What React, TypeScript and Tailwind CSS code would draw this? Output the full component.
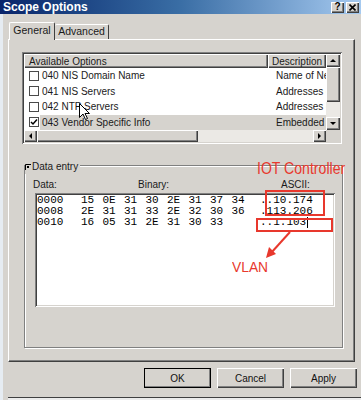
import React from "react"

const raised =
  "shadow-[inset_1px_1px_0_#ffffff,inset_-1px_-1px_0_#404040,inset_-2px_-2px_0_#808080]"
const sunken =
  "shadow-[inset_1px_1px_0_#808080,inset_-1px_-1px_0_#ffffff,inset_2px_2px_0_#404040,inset_-2px_-2px_0_#d6d3ce]"

function Arrow({ dir }: { dir: "up" | "down" | "left" | "right" }) {
  const pts = {
    up: "1,5 4,2 7,5",
    down: "1,2 4,5 7,2",
    left: "5,1 2,4 5,7",
    right: "2,1 5,4 2,7",
  }[dir]
  return (
    <svg width="8" height="8" viewBox="0 0 8 8">
      <polygon points={pts} fill="#000" />
    </svg>
  )
}

function ScrollBtn({ dir, className }: { dir: "up" | "down" | "left" | "right"; className: string }) {
  return (
    <div className={`flex items-center justify-center bg-[#d6d3ce] ${raised} ${className}`}>
      <Arrow dir={dir} />
    </div>
  )
}

const options = [
  { name: "040 NIS Domain Name", desc: "Name of Network", checked: false },
  { name: "041 NIS Servers", desc: "Addresses of", checked: false },
  { name: "042 NTP Servers", desc: "Addresses of", checked: false },
  { name: "043 Vendor Specific Info", desc: "Embedded vendor", checked: true },
]

const dataRows = [
  { addr: "0000", bytes: ["15", "0E", "31", "30", "2E", "31", "37", "34"], ascii: "..10.174" },
  { addr: "0008", bytes: ["2E", "31", "31", "33", "2E", "32", "30", "36"], ascii: ".113.206" },
  { addr: "0010", bytes: ["16", "05", "31", "2E", "31", "30", "33"], ascii: "..1.103" },
]

function Button({ label, isDefault }: { label: string; isDefault?: boolean }) {
  return (
    <div
      className={`h-[20px] w-[67px] flex items-center justify-center bg-[#d6d3ce] text-[#111] ${raised} ${
        isDefault ? "outline outline-1 outline-black -outline-offset-1" : ""
      }`}
    >
      {label}
    </div>
  )
}

export default function App() {
  return (
    <div className="relative w-[361px] h-[400px] overflow-hidden bg-[#d6d3ce] font-['Liberation_Sans',Arial,sans-serif] text-[10px] text-[#1a1a1a] flex flex-col">
      {/* title bar */}
      <div className="h-[14px] flex items-center bg-linear-to-r from-[#0a246a] via-[#3a6ea5] to-[#a6caf0] pl-[3px] pr-[2px]">
        <span className="text-white font-bold text-[12px] leading-none">Scope Options</span>
        <div className="ml-auto flex gap-[2px]">
          <div className={`w-[13px] h-[11px] bg-[#d6d3ce] ${raised} flex items-center justify-center text-[10px] font-bold leading-none text-black`}>?</div>
          <div className={`w-[13px] h-[11px] bg-[#d6d3ce] ${raised} flex items-center justify-center`}>
            <svg width="7" height="7" viewBox="0 0 7 7">
              <path d="M0.5 0.5 L6.5 6.5 M6.5 0.5 L0.5 6.5" stroke="#000" strokeWidth="1.6" />
            </svg>
          </div>
        </div>
      </div>

      <div className="flex-1 flex flex-col border-l-[3px] border-[#e6ecf2] pl-[5px] pt-[8px]">
        {/* tabs */}
        <div className="flex items-end h-[17px] pl-[1px] text-[10.5px]">
          <div className="relative z-10 h-[18px] -mb-[1px] w-[46px] bg-[#d6d3ce] border-t border-l border-white border-r border-r-[#404040] rounded-t-[2px] flex items-center justify-center pb-[2px]">
            General
          </div>
          <div className="h-[15px] w-[54px] bg-[#d6d3ce] border-t border-r border-white border-r-[#404040] rounded-t-[2px] flex items-center justify-center">
            Advanced
          </div>
        </div>

        {/* tab panel */}
        <div className="w-[347px] h-[323px] border-t border-l border-white border-r border-b border-r-[#404040] border-b-[#404040] shadow-[inset_-1px_-1px_0_#808080] pt-[12px] pl-[13px]">
          {/* available options list */}
          <div className={`w-[320px] h-[92px] p-[2px] bg-white ${sunken}`}>
            <div className="flex h-[88px]">
              <div className="w-[302px] flex flex-col">
                <div className="flex h-[14px]">
                  <div className={`w-[244px] bg-[#d6d3ce] ${raised} pl-[5px] flex items-center`}>Available Options</div>
                  <div className={`w-[58px] bg-[#d6d3ce] ${raised} pl-[4px] flex items-center overflow-hidden whitespace-nowrap`}>Description</div>
                </div>
                {options.map((o) => (
                  <div key={o.name} className="flex h-[15.5px] items-center">
                    <div className="w-[16px] flex items-center justify-center pl-[3px]">
                      <div className="w-[10px] h-[10px] border border-[#4a4a4a] bg-white flex items-center justify-center">
                        {o.checked && (
                          <svg width="8" height="8" viewBox="0 0 8 8">
                            <path d="M1 4 L3 6 L7 1.5" stroke="#000" strokeWidth="1.5" fill="none" />
                          </svg>
                        )}
                      </div>
                    </div>
                    <div className={`flex flex-1 h-full items-center ${o.checked ? "bg-[#d6d3ce]" : ""}`}>
                      <div className="w-[228px] pl-[2px] whitespace-nowrap">{o.name}</div>
                      <div className="w-[58px] pl-[8px] overflow-hidden whitespace-nowrap">{o.desc}</div>
                    </div>
                  </div>
                ))}
                <div className="flex h-[12px] mt-auto">
                  <ScrollBtn dir="left" className="w-[13px] h-[12px]" />
                  <div className={`w-[161px] h-[12px] bg-[#d6d3ce] ${raised}`} />
                  <div className="w-[115px] h-[12px] bg-[#ebe9e5]" />
                  <ScrollBtn dir="right" className="w-[13px] h-[12px]" />
                </div>
              </div>
              <div className="w-[14px] flex flex-col">
                <ScrollBtn dir="up" className="w-[14px] h-[13px]" />
                <div className={`h-[35px] bg-[#d6d3ce] ${raised}`} />
                <div className="h-[15px] bg-[#ebe9e5]" />
                <ScrollBtn dir="down" className="w-[14px] h-[13px]" />
                <div className="flex-1 bg-[#d6d3ce]" />
              </div>
            </div>
          </div>

          {/* data entry group */}
          <div className="relative mt-[21px] ml-[2px] w-[319px] h-[183px] border border-[#808080] shadow-[1px_1px_0_#ffffff,inset_1px_1px_0_#ffffff] pt-[12px] pl-[8px]">
            <div className="absolute -top-[7px] left-[0px] flex items-center bg-[#d6d3ce] pr-[2px]">
              <svg width="6" height="6" viewBox="0 0 6 6" className="mr-[1px]">
                <path d="M0.5 6 V0.5 H6" stroke="#000" strokeWidth="1" fill="none" />
                <rect x="2" y="2" width="2" height="2" fill="#000" />
              </svg>
              Data entry
            </div>
            <div className="flex h-[13px] items-center">
              <span className="w-[105px]">Data:</span>
              <span className="w-[143px]">Binary:</span>
              <span>ASCII:</span>
            </div>
            <div className={`mt-[2px] ml-[2px] w-[300px] h-[114px] bg-white p-[2px] ${sunken}`}>
              <div className="font-['Liberation_Mono','Courier_New',monospace] text-[11px] leading-[11px] text-black">
                {dataRows.map((r, i) => (
                  <div key={r.addr} className="flex h-[11px] whitespace-pre">
                    <span className="w-[44px]">{r.addr}</span>
                    <span className="w-[179px] flex">
                      {r.bytes.map((b, j) => (
                        <span key={j} className="w-[21.5px]">{b}</span>
                      ))}
                    </span>
                    <span className="relative">
                      {r.ascii}
                      {i === 2 && <span className="absolute -right-[2px] top-0 h-[11px] w-px bg-black" />}
                    </span>
                  </div>
                ))}
              </div>
            </div>
          </div>
        </div>

        {/* buttons */}
        <div className="flex justify-end gap-[6px] mt-[6px] pr-[6px] w-[355px]">
          <Button label="OK" isDefault />
          <Button label="Cancel" />
          <Button label="Apply" />
        </div>
        <div className="mt-auto h-[3px] border-t border-[#404040] bg-[#ececec]" />
      </div>

      {/* mouse cursor */}
      <svg className="absolute left-[79px] top-[103px]" width="12" height="18" viewBox="0 0 12 18">
        <path d="M0.5 0.5 V14.5 L4 11 L6.5 16.5 L8.5 15.5 L6 10.5 H10.5 Z" fill="#fff" stroke="#000" strokeWidth="1" />
      </svg>

      {/* annotations */}
      <div className="absolute left-[257px] top-[159px] text-[16px] leading-[20px] text-[#e8382d] whitespace-nowrap origin-left scale-x-[0.88]">
        IOT Controller
      </div>
      <div className="absolute left-[265px] top-[190px] w-[60px] h-[26px] border-2 border-[#e8382d]" />
      <div className="absolute left-[256px] top-[218px] w-[77px] h-[14px] border-2 border-[#e8382d]" />
      <svg className="absolute left-[260px] top-[230px]" width="36" height="32" viewBox="0 0 36 32">
        <path d="M30 2 L11 23" stroke="#e8382d" strokeWidth="2" />
        <polygon points="6,28 9,17 16,24" fill="#e8382d" />
      </svg>
      <div className="absolute left-[232px] top-[258px] text-[15px] leading-[18px] text-[#e8382d] origin-left scale-x-[0.92]">
        VLAN
      </div>
    </div>
  )
}
